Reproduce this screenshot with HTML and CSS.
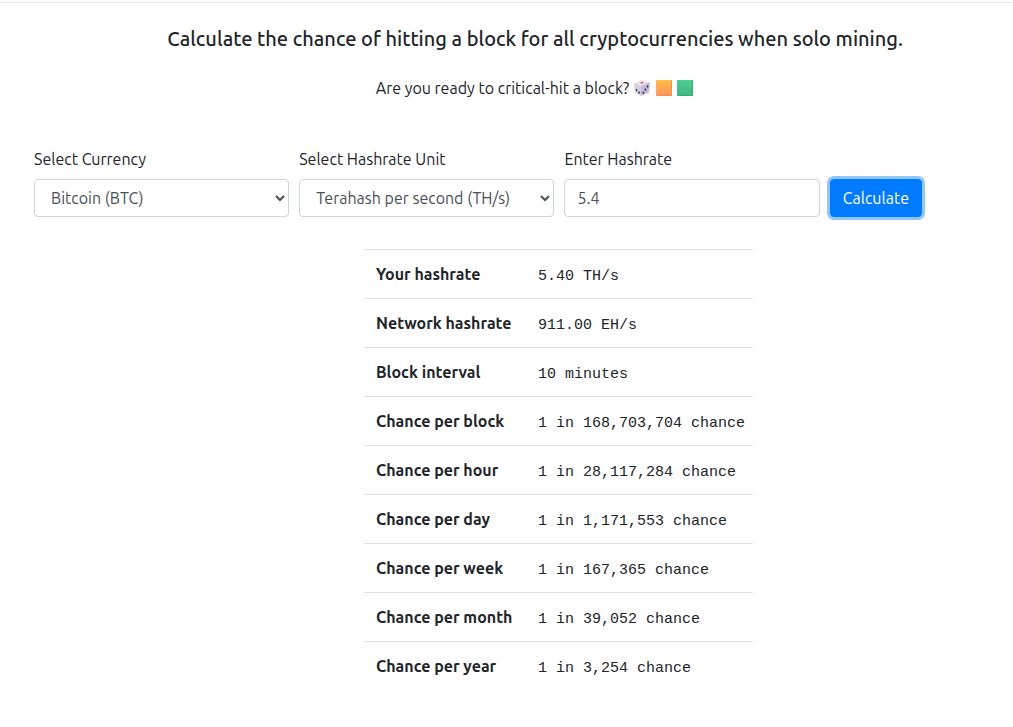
FILE: index.html
```html
<!DOCTYPE html>
<html lang="en">
<head>
    <meta charset="utf-8">
    <meta name="viewport" content="width=device-width, initial-scale=1">
    <title>Solo Mining Chance Calculator</title>
    <link rel="stylesheet" href="styles.css">
</head>
<body>
    <main>
        <header class="intro">
            <h1>Calculate the chance of hitting a block for all cryptocurrencies when solo mining.</h1>
            <p class="tagline">
                Are you ready to critical-hit a block?
                <svg class="icon" viewBox="0 0 18 18" role="img" aria-label="Die">
                    <path d="M9 1 17 3.500 8 7 1 4z" fill="#e6e1ec"/>
                    <path d="M1 4 8 7v10L2 13.500z" fill="#d6cfe0"/>
                    <path d="M17 3.500 8 7v10l8-3.500z" fill="#c3b9d2"/>
                    <ellipse cx="9" cy="3.800" rx="1.600" ry="1" fill="#e8667a"/>
                    <g fill="#4a3767">
                        <ellipse cx="3.500" cy="11" rx="0.800" ry="1.200"/>
                        <ellipse cx="6" cy="13.500" rx="0.800" ry="1.200"/>
                        <ellipse cx="14.600" cy="7.500" rx="0.900" ry="1.300"/>
                        <ellipse cx="12.500" cy="10.500" rx="0.900" ry="1.300"/>
                        <ellipse cx="10.400" cy="13.700" rx="0.900" ry="1.300"/>
                    </g>
                </svg>
                <svg class="icon" viewBox="0 0 18 18" role="img" aria-label="Orange square">
                    <defs>
                        <linearGradient id="orange" x2="0" y2="1">
                            <stop offset="0" stop-color="#ffbd45"/>
                            <stop offset="1" stop-color="#ff9360"/>
                        </linearGradient>
                    </defs>
                    <rect x="1" y="1" width="16" height="16" rx="1" fill="url(#orange)"/>
                    <path d="M16.500 1.500v15h-15" fill="none" stroke="#f58c52"/>
                </svg>
                <svg class="icon" viewBox="0 0 18 18" role="img" aria-label="Green square">
                    <defs>
                        <linearGradient id="green" x2="0" y2="1">
                            <stop offset="0" stop-color="#4bce8f"/>
                            <stop offset="1" stop-color="#41b883"/>
                        </linearGradient>
                    </defs>
                    <rect x="1" y="1" width="16" height="16" rx="1" fill="url(#green)"/>
                    <path d="M16.500 1.500v15h-15" fill="none" stroke="#3aa872"/>
                </svg>
            </p>
        </header>

        <form class="calculator">
            <div class="field">
                <label for="currency">Select Currency</label>
                <select id="currency" class="control">
                    <option>Bitcoin (BTC)</option>
                </select>
            </div>
            <div class="field">
                <label for="unit">Select Hashrate Unit</label>
                <select id="unit" class="control">
                    <option>Terahash per second (TH/s)</option>
                </select>
            </div>
            <div class="field">
                <label for="hashrate">Enter Hashrate</label>
                <input id="hashrate" class="control" type="text" inputmode="decimal" value="5.4">
            </div>
            <button type="button" class="btn">Calculate</button>
        </form>

        <section class="results">
            <table>
                <tbody>
                    <tr><th scope="row">Your hashrate</th><td>5.40 TH/s</td></tr>
                    <tr><th scope="row">Network hashrate</th><td>911.00 EH/s</td></tr>
                    <tr><th scope="row">Block interval</th><td>10 minutes</td></tr>
                    <tr><th scope="row">Chance per block</th><td>1 in 168,703,704 chance</td></tr>
                    <tr><th scope="row">Chance per hour</th><td>1 in 28,117,284 chance</td></tr>
                    <tr><th scope="row">Chance per day</th><td>1 in 1,171,553 chance</td></tr>
                    <tr><th scope="row">Chance per week</th><td>1 in 167,365 chance</td></tr>
                    <tr><th scope="row">Chance per month</th><td>1 in 39,052 chance</td></tr>
                    <tr><th scope="row">Chance per year</th><td>1 in 3,254 chance</td></tr>
                </tbody>
            </table>
        </section>
    </main>
</body>
</html>
```
FILE: styles.css
```css
* {
    box-sizing: border-box;
}
body {
    margin: 0;
    padding-top: 2px;
    background: #fff;
    color: #212529;
    font-family: Ubuntu, "Noto Sans", sans-serif;
    font-size: 16px;
    line-height: 24px;
}
main {
    border-top: 1px solid #e5e5e5;
    padding-top: 24px;
}
.intro {
    padding-left: 57px;
    text-align: center;
}
h1 {
    margin: 0 0 25px;
    font-size: 20px;
    font-weight: 500;
    line-height: 24px;
}
.tagline {
    margin: 0;
}
.icon {
    width: 18px;
    height: 18px;
    vertical-align: -3px;
}
.calculator {
    display: grid;
    grid-template-columns: repeat(3, 1fr) auto;
    gap: 10px;
    align-items: end;
    margin-top: 47px;
    padding: 0 91px 0 34px;
}
label {
    display: block;
    margin-bottom: 8px;
}
.control {
    display: block;
    width: 100%;
    height: 38px;
    padding: 6px 12px;
    border: 1px solid #ced4da;
    border-radius: 4px;
    background: #fff;
    color: #495057;
    font: inherit;
}
select.control {
    padding-right: 0;
}
.btn {
    height: 38px;
    padding: 6px 12px;
    border: 1px solid #007bff;
    border-radius: 4px;
    background: #007bff;
    color: #fff;
    font: inherit;
    box-shadow: 0 0 0 3px #8fc6ff;
    cursor: pointer;
}
.results {
    margin-top: 32px;
    padding-left: 104px;
}
table {
    width: 389px;
    margin: 0 auto;
    border-collapse: collapse;
    table-layout: fixed;
}
th,
td {
    padding: 12px;
    border-top: 1px solid #dee2e6;
    text-align: left;
    vertical-align: baseline;
    white-space: nowrap;
}
th {
    width: 162px;
    font-weight: 700;
}
td {
    font-family: Consolas, "Liberation Mono", monospace;
    font-size: 15px;
    line-height: 16px;
}
```
